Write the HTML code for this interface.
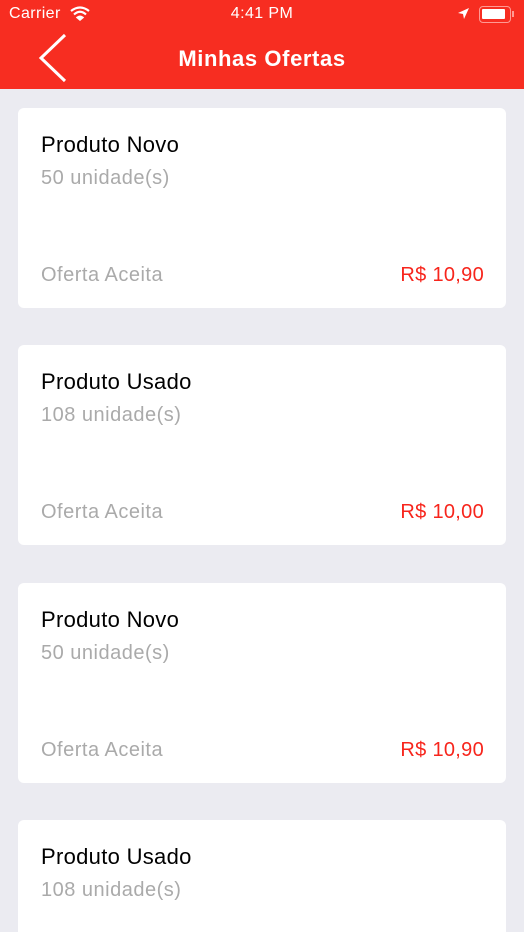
<!DOCTYPE html>
<html style="width:524px;height:932px;overflow:hidden"><head><meta charset="utf-8"><style>
*{margin:0;padding:0;box-sizing:border-box}
body{width:524px;height:932px;overflow:hidden;background:#ebebf1;font-family:"Liberation Sans",sans-serif;position:relative}
.hdr{position:absolute;left:0;top:0;width:524px;height:89px;background:#f72d21;color:#fff}
.sb{position:absolute;top:5px;font-size:16px;letter-spacing:0.4px}
.title{position:absolute;top:46px;width:100%;text-align:center;font-size:22px;font-weight:bold;letter-spacing:0.6px}
.card{position:absolute;left:18px;width:488px;height:200px;background:#fff;border-radius:6px}
.n{position:absolute;left:23px;top:24px;font-size:22px;color:#000;letter-spacing:0.3px}
.u{position:absolute;left:23px;top:59px;font-size:20px;color:#aaa;letter-spacing:0.5px}
.o{position:absolute;left:23px;top:156px;font-size:20px;color:#aaa;letter-spacing:0.5px}
.p{position:absolute;right:22px;top:156px;font-size:20px;color:#f7251c;letter-spacing:0.3px}
</style></head><body>
<div class="hdr">
<div class="sb" style="left:9px">Carrier</div>
<svg style="position:absolute;left:70px;top:6px" width="20" height="15" viewBox="0 0 20 15"><path d="M1 5 Q10 -2 19 5" stroke="#fff" stroke-width="2.2" fill="none"/><path d="M4 8.5 Q10 3 16 8.5" stroke="#fff" stroke-width="2.2" fill="none"/><path d="M7 11.5 Q10 9 13 11.5 L10 14Z" fill="#fff" stroke="#fff" stroke-width="1.5"/></svg>
<div class="sb" style="left:0;width:524px;text-align:center">4:41 PM</div>
<svg style="position:absolute;left:457px;top:7px" width="13" height="13" viewBox="0 0 13 13"><path d="M12 1 L1 6 L6 7 L7 12Z" fill="#fff"/></svg>
<div style="position:absolute;left:479px;top:6px;width:32px;height:17px;border:1.5px solid #ff9a94;border-radius:4px"><div style="position:absolute;left:2px;top:2px;width:23px;height:10px;background:#fff;border-radius:1px"></div></div>
<div style="position:absolute;left:512px;top:11px;width:2px;height:6px;background:#ff9a94"></div>
<svg style="position:absolute;left:36px;top:32px" width="34" height="52" viewBox="0 0 34 52"><path d="M29 3 L5 26 L29 49" stroke="#fff" stroke-width="3" fill="none"/></svg>
<div class="title">Minhas Ofertas</div>
</div>
<div class="card" style="top:108px"><div class="n">Produto Novo</div><div class="u">50 unidade(s)</div><div class="o">Oferta Aceita</div><div class="p">R$ 10,90</div></div>
<div class="card" style="top:345px"><div class="n">Produto Usado</div><div class="u">108 unidade(s)</div><div class="o">Oferta Aceita</div><div class="p">R$ 10,00</div></div>
<div class="card" style="top:583px"><div class="n">Produto Novo</div><div class="u">50 unidade(s)</div><div class="o">Oferta Aceita</div><div class="p">R$ 10,90</div></div>
<div class="card" style="top:820px;height:112px;border-radius:6px 6px 0 0"><div class="n">Produto Usado</div><div class="u">108 unidade(s)</div></div>
</body></html>
